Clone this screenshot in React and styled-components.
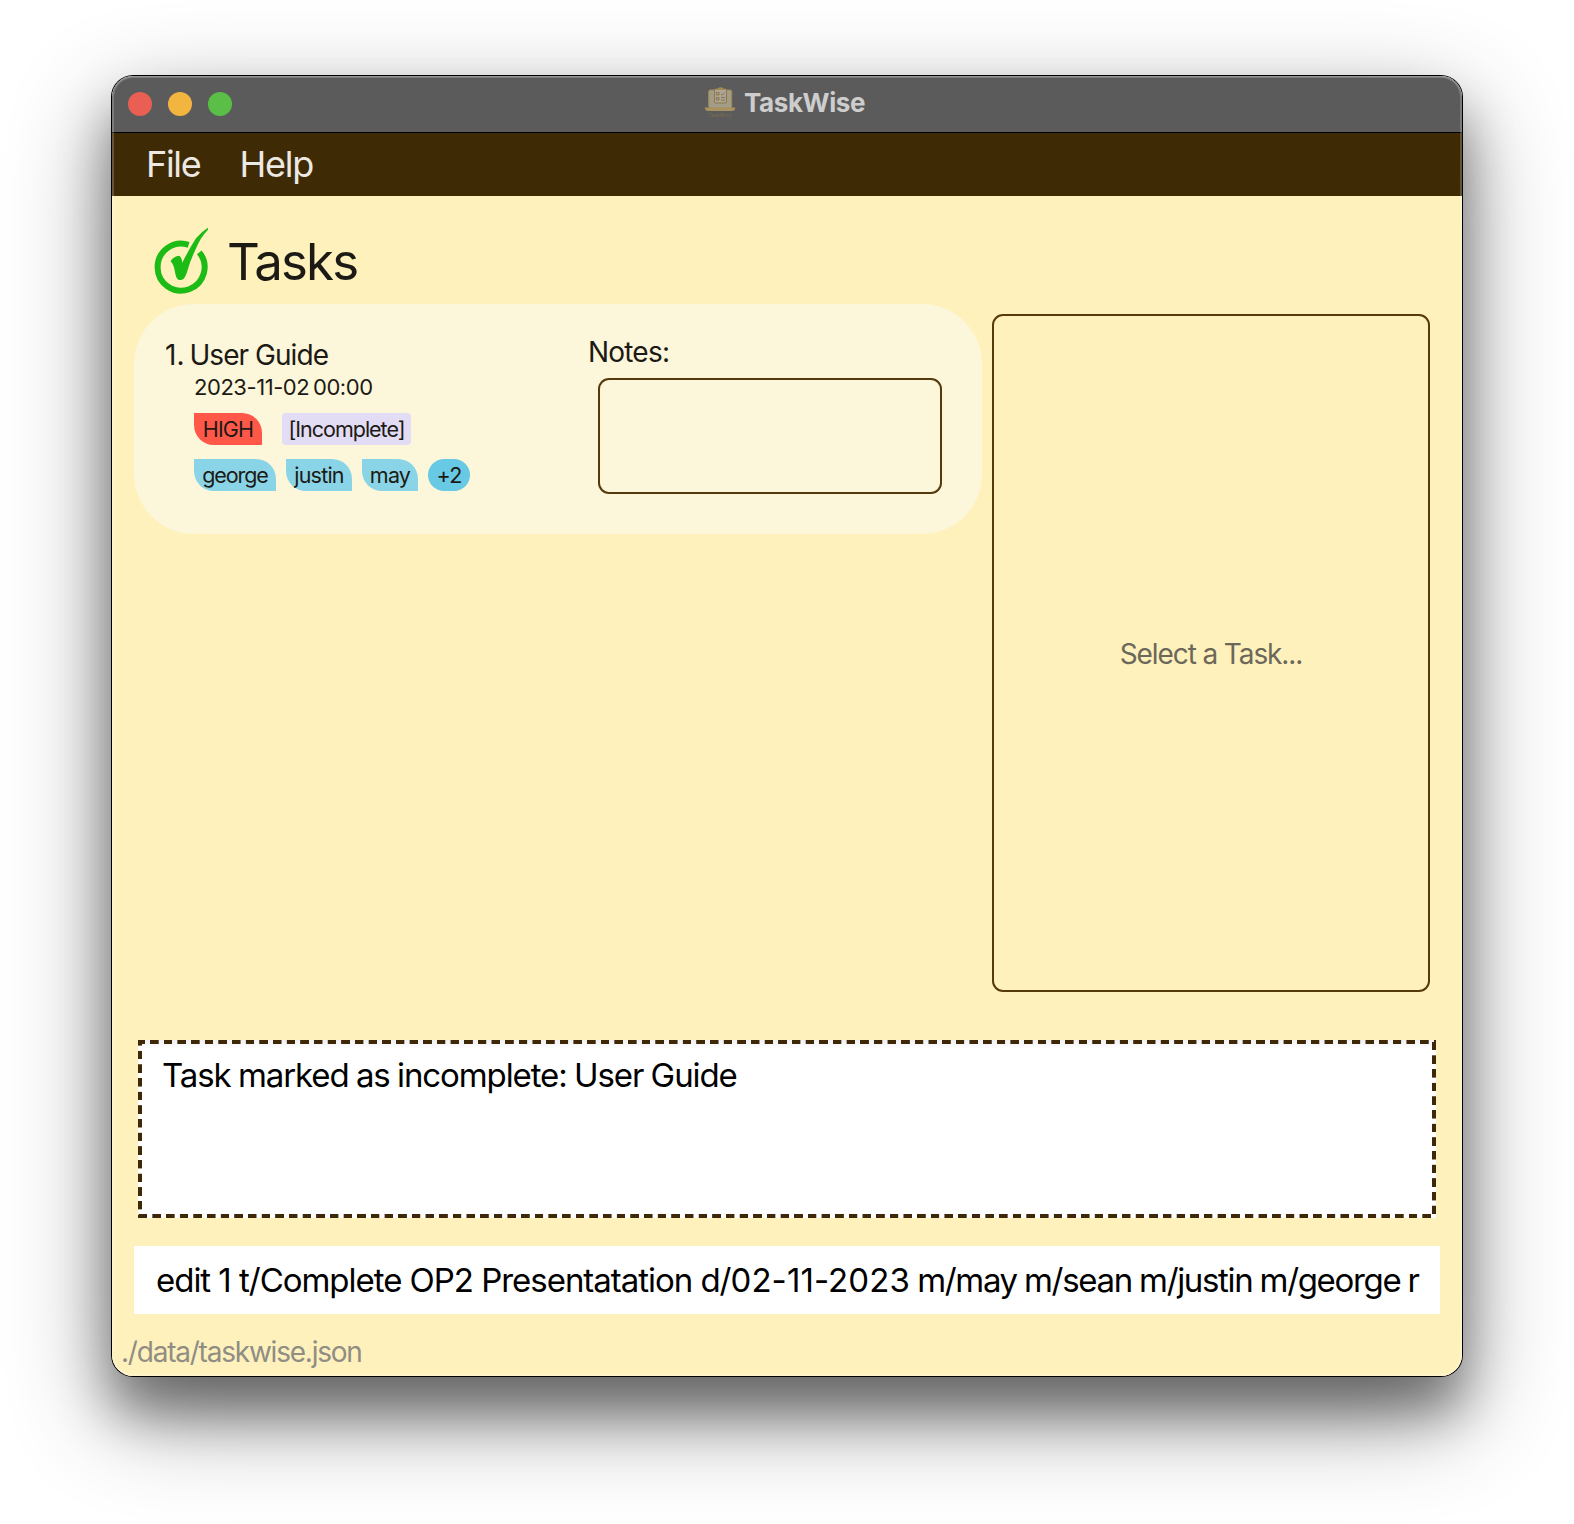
import React from "react";
import styled, { createGlobalStyle } from "styled-components";

const Global = createGlobalStyle`
  * { box-sizing: border-box; }
  body { margin: 0; background: #fff; font-family: Inter, "Liberation Sans", sans-serif; }
`;

const Page = styled.main`
  width: 1574px;
  height: 1524px;
  padding: 76px 112px 0;
  overflow: hidden;
  background: #fff;
`;

const Window = styled.div`
  position: relative;
  display: flex;
  flex-direction: column;
  width: 1350px;
  height: 1300px;
  border-radius: 21px;
  overflow: hidden;
  background: #fff1bb;
`;

const Shadow = styled.div`
  width: 1350px;
  height: 1300px;
  border-radius: 21px;
  box-shadow: 0 0 0 1px #000, 0 36px 50px rgba(0, 0, 0, 0.36), 0 36px 100px rgba(0, 0, 0, 0.45);
`;

const Rim = styled.div`
  position: absolute;
  inset: 0;
  border-radius: 21px;
  box-shadow: inset 0 0 0 2px rgba(255, 255, 255, 0.2), inset 0 1px 0 rgba(255, 255, 255, 0.2);
  pointer-events: none;
`;

const TitleBar = styled.header`
  display: grid;
  grid-template-columns: 1fr auto 1fr;
  align-items: center;
  height: 57px;
  padding: 0 16px;
  background: #5b5b5b;
  border-bottom: 1px solid #000;
`;

const Lights = styled.div`
  display: flex;
  gap: 16px;
`;

const Light = styled.span`
  width: 24px;
  height: 24px;
  border-radius: 50%;
  background: ${(p) => p.$color};
`;

const AppTitle = styled.div`
  display: flex;
  align-items: center;
  gap: 8px;
  padding-right: 5px;
`;

const Text = styled.span`
  display: block;
  white-space: pre;
  font-size: ${(p) => p.$size}px;
  line-height: ${(p) => p.$line || p.$size * 1.2}px;
  letter-spacing: ${(p) => p.$track || 0}px;
  word-spacing: ${(p) => p.$word || 0}px;
  font-weight: ${(p) => p.$weight || 400};
  color: ${(p) => p.$color || "#1c1a14"};
  margin-top: ${(p) => p.$top || 0}px;
`;

const Tracked = styled.span`
  letter-spacing: ${(p) => p.$track}px;
  word-spacing: ${(p) => p.$word || 0}px;
`;

const MenuBar = styled.nav`
  display: flex;
  align-items: center;
  gap: 39px;
  height: 63px;
  padding: 0 34px;
  background: #3f2a06;
`;

const Heading = styled.div`
  display: flex;
  align-items: center;
  gap: 17px;
  height: 108px;
  padding: 24px 0 0 40px;
`;

const CheckSvg = styled.svg`
  margin-bottom: 4px;
`;

const Columns = styled.section`
  display: flex;
  align-items: flex-start;
  gap: 10px;
  padding-left: 22px;
  height: 736px;
`;

const Card = styled.article`
  display: flex;
  width: 848px;
  height: 230px;
  border-radius: 60px;
  background: #fcf6db;
`;

const Info = styled.div`
  width: 454px;
  padding: 34px 0 0 31px;
`;

const TitleRow = styled.div`
  display: flex;
  gap: 5px;
`;

const Details = styled.div`
  display: flex;
  flex-direction: column;
  padding-left: 29px;
`;

const Badges = styled.div`
  display: flex;
  gap: ${(p) => p.$gap}px;
  margin-top: ${(p) => p.$top}px;
`;

const Badge = styled.span`
  display: flex;
  align-items: center;
  justify-content: center;
  width: ${(p) => p.$width}px;
  height: 32px;
  padding-top: 2px;
  border-radius: ${(p) => p.$radius || "0 20px 0 20px"};
  background: ${(p) => p.$color};
`;

const Notes = styled.div`
  padding-top: 31px;
`;

const NotesBox = styled.div`
  width: 344px;
  height: 116px;
  margin: 9px 0 0 10px;
  border: 2px solid #563a0c;
  border-radius: 11px;
`;

const Detail = styled.aside`
  display: flex;
  align-items: center;
  justify-content: center;
  width: 438px;
  height: 678px;
  margin-top: 10px;
  border: 2px solid #563a0c;
  border-radius: 11px;
`;

const dashes = (dir, phase) =>
  `repeating-linear-gradient(${dir}, #3e2807 0 8px, transparent 8.5px 13.155px, #3e2807 13.656px) ${phase}`;

const Result = styled.section`
  width: 1298px;
  height: 178px;
  margin-left: 26px;
  padding: 13px 24px;
  background:
    ${dashes("90deg", "-1.3px 0 / 1310px 4px no-repeat")},
    ${dashes("90deg", "0.9px 100% / 1310px 4px no-repeat")},
    ${dashes("180deg", "0 -2.7px / 4px 190px no-repeat")},
    ${dashes("180deg", "100% 2px / 4px 190px no-repeat")},
    linear-gradient(#f1f1f4, #fff 9px);
`;

const Command = styled.section`
  width: 1306px;
  height: 68px;
  margin: 28px 0 0 22px;
  padding: 12px 0 0 22px;
  background: #fff;
`;

const Footer = styled.footer`
  padding: 16px 0 0 9px;
`;

function CheckIcon() {
  return (
    <CheckSvg width="58" height="68" viewBox="0 0 58 68">
      <path d="M36.600 18.900A23.500 23.500 0 1 0 47.300 26.300" fill="none" stroke="#1dbb16" strokeWidth="6" />
      <path
        d="M56 1.800Q49 6 44 12.300Q36.500 24 30.300 36.700Q29.500 30 26.500 29.800Q21 31 18.500 35.300Q21.500 38 22.600 44Q24 52.500 26 53.500Q29 55 32 52.500Q34 50 35.700 44Q38.500 34 42.500 25.700Q46 17.500 49 12.500Q52 8 56 3.800Z"
        fill="#1dbb16"
      />
    </CheckSvg>
  );
}

function LaptopIcon() {
  return (
    <svg width="32" height="36" viewBox="0 0 32 36">
      <rect x="4.700" y="4" width="23" height="18" rx="1.500" fill="#a39c88" stroke="#a08a58" />
      <rect x="10.500" y="3" width="12" height="14" rx="1" fill="#aaa596" stroke="#91783f" />
      <path d="M13.500 3.500V2.500Q16.500 0 19.500 2.500V3.500Z" fill="#a58a4c" />
      <path d="M12.500 6.500H15V9H12.500ZM12.500 11.500H15V14H12.500Z" fill="none" stroke="#8b7545" />
      <path d="M17 8L18.200 9.200L20.800 6.500M17 11.500H21M17 14H21" fill="none" stroke="#8b7545" />
      <path d="M0.700 21.500H31.300Q31 25 27.500 25H4.500Q1 25 0.700 21.500Z" fill="#a9925f" />
      <text x="4.500" y="31" fontSize="4.500" letterSpacing="0.350" fill="#80704a">TaskWise</text>
    </svg>
  );
}

const members = [
  { name: "george", width: 82 },
  { name: "justin", width: 66 },
  { name: "may", width: 56 },
];

export default function App() {
  return (
    <Page>
      <Global />
      <Shadow>
        <Window>
          <TitleBar>
            <Lights>
              <Light $color="#e95f54" />
              <Light $color="#f2b640" />
              <Light $color="#5bbf47" />
            </Lights>
            <AppTitle>
              <LaptopIcon />
              <Text $size={26} $weight={700} $track={-0.4} $top={-2} $color="#cdcdcd">TaskWise</Text>
            </AppTitle>
          </TitleBar>
          <MenuBar>
            <Text $size={36} $track={-1.3} $color="#ece9e4">File</Text>
            <Text $size={36} $track={-1.2} $color="#ece9e4">Help</Text>
          </MenuBar>
          <Heading>
            <CheckIcon />
            <Text $size={51} $track={-1.9}>Tasks</Text>
          </Heading>
          <Columns>
            <Card>
              <Info>
                <TitleRow>
                  <Text $size={28} $line={34}>1.</Text>
                  <Text $size={28} $line={34} $track={-0.95}>User Guide</Text>
                </TitleRow>
                <Details>
                  <Text $size={22} $line={30} $track={-0.45} $word={-2}>2023-11-02 00:00</Text>
                  <Badges $gap={20} $top={11}>
                    <Badge $width={68} $color="#ff5849"><Text $size={21.5} $track={-0.8}>HIGH</Text></Badge>
                    <Badge $width={129} $radius="4px" $color="#e3dcf5"><Text $size={21.5} $track={-1}>[Incomplete]</Text></Badge>
                  </Badges>
                  <Badges $gap={10} $top={14}>
                    {members.map((m) => (
                      <Badge key={m.name} $width={m.width} $color="#8ad4e8"><Text $size={21.5} $track={m.name === "george" ? -1.1 : -0.8}>{m.name}</Text></Badge>
                    ))}
                    <Badge $width={42} $radius="16px" $color="#67c9e3"><Text $size={21.5} $track={-0.8}>+2</Text></Badge>
                  </Badges>
                </Details>
              </Info>
              <Notes>
                <Text $size={28} $line={34} $track={-0.8}>Notes:</Text>
                <NotesBox />
              </Notes>
            </Card>
            <Detail>
              <Text $size={28} $track={-1.1} $top={4} $color="#6b685a">Select a Task...</Text>
            </Detail>
          </Columns>
          <Result>
            <Text $size={33} $line={44} $track={-1.1} $word={-0.8} $color="#000">Task marked as incomplete: User Guide</Text>
          </Result>
          <Command>
            <Text $size={33} $line={44} $track={-1.03} $color="#000">
              edit 1 t/Complete OP2 Presentatation d/<Tracked $track={0.1}>02-11-2023</Tracked>
              <Tracked $track={-1.34} $word={-0.7}> m/may m/sean m/justin m/george r</Tracked>
            </Text>
          </Command>
          <Footer>
            <Text $size={28} $line={44} $track={-1.22} $color="#8f8d84">./data/taskwise.json</Text>
          </Footer>
          <Rim />
        </Window>
      </Shadow>
    </Page>
  );
}
